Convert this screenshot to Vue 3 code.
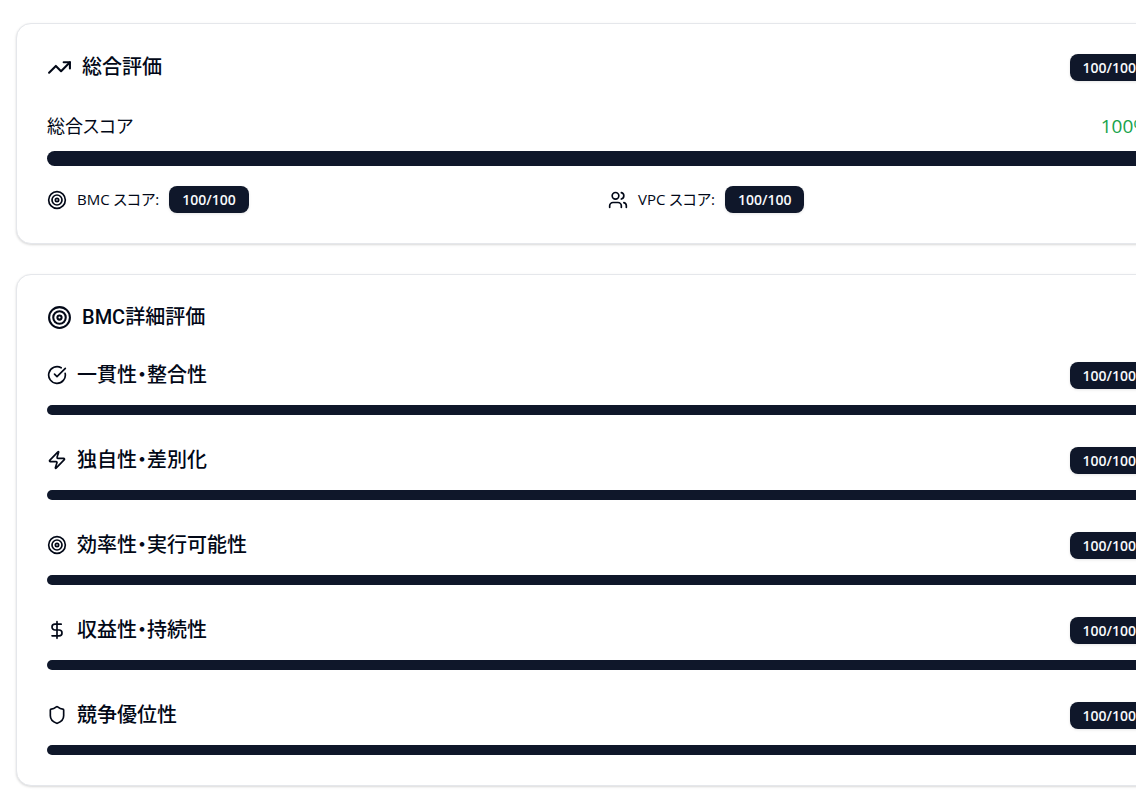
<script setup>
import { h } from 'vue'

const shapes = {
  trend: [
    ['polyline', { points: '22 7 13.5 15.5 8.5 10.5 2 17' }],
    ['polyline', { points: '16 7 22 7 22 13' }],
  ],
  target: [
    ['circle', { cx: 12, cy: 12, r: 10 }],
    ['circle', { cx: 12, cy: 12, r: 6 }],
    ['circle', { cx: 12, cy: 12, r: 2 }],
  ],
  users: [
    ['path', { d: 'M16 21v-2a4 4 0 0 0-4-4H6a4 4 0 0 0-4 4v2' }],
    ['circle', { cx: 9, cy: 7, r: 4 }],
    ['path', { d: 'M22 21v-2a4 4 0 0 0-3-3.87' }],
    ['path', { d: 'M16 3.13a4 4 0 0 1 0 7.75' }],
  ],
  check: [
    ['path', { d: 'M21.801 10A10 10 0 1 1 17 3.335' }],
    ['path', { d: 'm9 11 3 3L22 4' }],
  ],
  zap: [
    ['path', { d: 'M4 14a1 1 0 0 1-.78-1.63l9.9-10.2a.5.5 0 0 1 .86.46l-1.92 6.02A1 1 0 0 0 13 10h7a1 1 0 0 1 .78 1.63l-9.9 10.2a.5.5 0 0 1-.86-.46l1.92-6.02A1 1 0 0 0 11 14z' }],
  ],
  dollar: [
    ['line', { x1: 12, x2: 12, y1: 2, y2: 22 }],
    ['path', { d: 'M17 5H9.5a3.5 3.5 0 0 0 0 7h5a3.5 3.5 0 0 1 0 7H6' }],
  ],
  shield: [
    ['path', { d: 'M20 13c0 5-3.5 7.5-7.66 8.95a1 1 0 0 1-.67-.01C7.5 20.5 4 18 4 13V6a1 1 0 0 1 1-1c2 0 4.5-1.2 6.24-2.72a1.17 1.17 0 0 1 1.52 0C14.51 3.81 17 5 19 5a1 1 0 0 1 1 1z' }],
  ],
}

const Icon = (props) =>
  h(
    'svg',
    {
      viewBox: '0 0 24 24',
      fill: 'none',
      stroke: 'currentColor',
      'stroke-width': 2,
      'stroke-linecap': 'round',
      'stroke-linejoin': 'round',
      'aria-hidden': 'true',
    },
    shapes[props.name].map(([tag, attrs]) => h(tag, attrs)),
  )
Icon.props = ['name']

const total = 100
const scores = [
  { icon: 'target', label: 'BMC スコア:', value: 100 },
  { icon: 'users', label: 'VPC スコア:', value: 100 },
]
const criteria = [
  { icon: 'check', label: '一貫性・整合性', value: 100 },
  { icon: 'zap', label: '独自性・差別化', value: 100 },
  { icon: 'target', label: '効率性・実行可能性', value: 100 },
  { icon: 'dollar', label: '収益性・持続性', value: 100 },
  { icon: 'shield', label: '競争優位性', value: 100 },
]
</script>

<template>
  <main class="page" lang="ja">
    <div class="stack">
      <section class="card">
        <header class="row overall">
          <h2 class="title"><Icon class="icon large" name="trend" />総合評価</h2>
          <span class="badge">{{ total }}/100</span>
        </header>
        <div class="row total">
          <span>総合スコア</span>
          <span class="percent">{{ total }}%</span>
        </div>
        <div class="track thick" role="progressbar" aria-label="総合スコア" :aria-valuenow="total">
          <div class="fill" :style="{ width: total + '%' }"></div>
        </div>
        <div class="scores">
          <div v-for="s in scores" :key="s.label" class="score">
            <Icon class="icon" :name="s.icon" />
            <span>{{ s.label }}</span>
            <span class="badge">{{ s.value }}/100</span>
          </div>
        </div>
      </section>

      <section class="card">
        <h2 class="title detail"><Icon class="icon large" name="target" />BMC詳細評価</h2>
        <div class="criteria">
          <div v-for="c in criteria" :key="c.label">
            <div class="row criterion">
              <h3 class="name"><Icon class="icon" :name="c.icon" />{{ c.label }}</h3>
              <span class="badge">{{ c.value }}/100</span>
            </div>
            <div class="track" role="progressbar" :aria-label="c.label" :aria-valuenow="c.value">
              <div class="fill" :style="{ width: c.value + '%' }"></div>
            </div>
          </div>
        </div>
      </section>
    </div>
  </main>
</template>

<style>
body {
  margin: 0;
  background: #fff;
}
</style>

<style scoped>
.page {
  overflow: hidden;
  padding: 23px 0 8px 16px;
  color: #020817;
  font-family: "Open Sans", "Noto Sans CJK JP", sans-serif;
  font-feature-settings: "palt";
}
.stack {
  display: grid;
  gap: 30px;
  margin-right: -44px;
}
.card {
  padding: 30px;
  border: 1px solid #e5e7eb;
  border-radius: 15px;
  background: #fff;
  box-shadow: 0 1px 3px rgba(0, 0, 0, 0.1), 0 1px 2px rgba(0, 0, 0, 0.06);
}
.row {
  display: flex;
  align-items: center;
  justify-content: space-between;
}
.overall {
  margin-bottom: 30px;
}
.title,
.name {
  display: flex;
  align-items: center;
  gap: 10px;
  margin: 0;
  font-family: Roboto, "Noto Sans CJK JP", sans-serif;
  font-size: 20px;
  font-weight: 500;
}
.title {
  line-height: 25px;
}
.detail {
  margin-bottom: 30px;
}
.name {
  line-height: 30px;
}
.icon {
  flex: none;
  width: 20px;
  height: 20px;
}
.large {
  width: 25px;
  height: 25px;
}
.badge {
  padding: 0 13px;
  border-radius: 8px;
  background: #0f172a;
  color: #f8fafc;
  font-size: 14px;
  font-weight: 600;
  line-height: 27px;
  box-shadow: 0 1px 3px rgba(0, 0, 0, 0.1);
}
.total {
  margin-bottom: 10px;
  font-size: 18px;
  line-height: 30px;
}
.percent {
  color: #16a34a;
  font-size: 19px;
}
.track {
  overflow: hidden;
  height: 10px;
  border-radius: 8px;
  background: #e2e8f0;
}
.thick {
  height: 15px;
}
.fill {
  height: 100%;
  background: #0f172a;
}
.scores {
  display: grid;
  grid-template-columns: 1fr 1fr;
  gap: 20px;
  margin-top: 20px;
}
.score {
  display: flex;
  align-items: center;
  gap: 10px;
  font-size: 15px;
  line-height: 27px;
}
.criteria {
  display: grid;
  gap: 30px;
}
.criterion {
  margin-bottom: 15px;
}
</style>
